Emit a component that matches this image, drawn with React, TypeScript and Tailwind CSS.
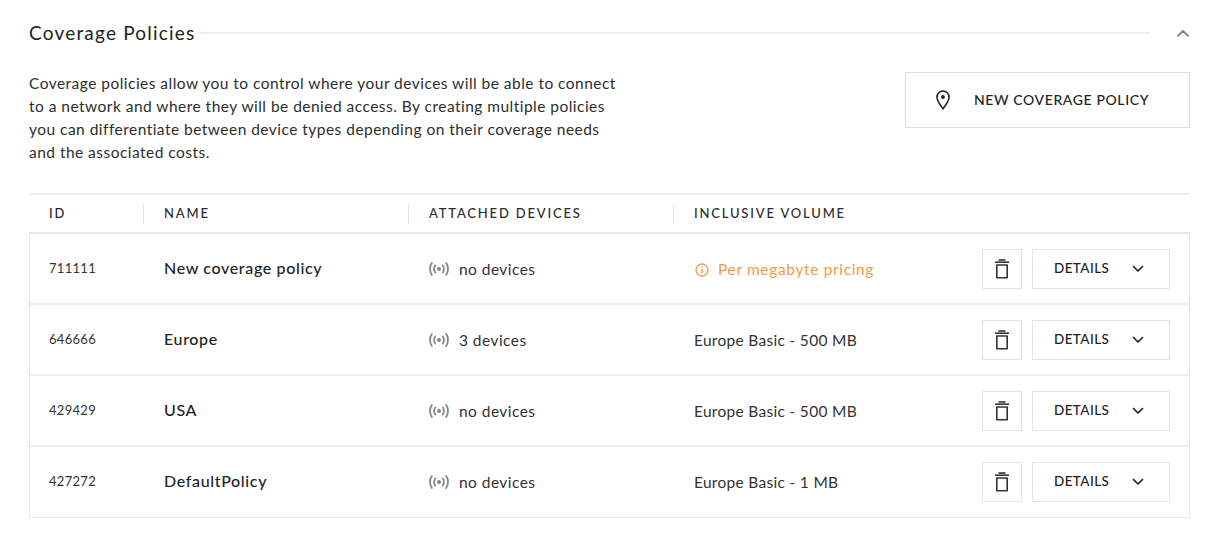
const policies = [
  { id: "711111", name: "New coverage policy", devices: "no devices", volume: "" },
  { id: "646666", name: "Europe", devices: "3 devices", volume: "Europe Basic - 500 MB" },
  { id: "429429", name: "USA", devices: "no devices", volume: "Europe Basic - 500 MB" },
  { id: "427272", name: "DefaultPolicy", devices: "no devices", volume: "Europe Basic - 1 MB" },
];

function SignalIcon() {
  return (
    <svg width="20" height="14" viewBox="0 0 20 14" fill="none" stroke="#858585" strokeWidth="1.8" strokeLinecap="round">
      <path d="M2.8 1C0.4 4.4 0.4 9.6 2.8 13" />
      <path d="M6.2 3.4C5 5.4 5 8.6 6.2 10.6" />
      <circle cx="10" cy="7" r="2" fill="#858585" stroke="none" />
      <path d="M13.8 3.4C15 5.4 15 8.6 13.8 10.6" />
      <path d="M17.2 1C19.6 4.4 19.6 9.6 17.2 13" />
    </svg>
  );
}

function InfoIcon() {
  return (
    <svg width="14" height="14" viewBox="0 0 14 14" fill="none" stroke="#f59a45" strokeWidth="1.3" strokeLinecap="round">
      <circle cx="7" cy="7" r="6" />
      <path d="M7 6.4V10" />
      <circle cx="7" cy="4.2" r="0.8" fill="#f59a45" stroke="none" />
    </svg>
  );
}

function TrashIcon() {
  return (
    <svg width="16" height="20" viewBox="0 0 16 20" fill="none" stroke="#333" strokeWidth="1.6">
      <path d="M1 3.2H15" />
      <path d="M4.5 1H11.5" />
      <path d="M2.8 6H13.2V18.8H2.8Z" strokeLinejoin="round" />
    </svg>
  );
}

function PinIcon() {
  return (
    <svg width="14" height="20" viewBox="0 0 14 20" fill="none" stroke="#222" strokeWidth="1.6" strokeLinejoin="round">
      <path d="M7 18.8C4.6 15.2 1 11.4 1 7.2C1 3.7 3.7 1 7 1C10.3 1 13 3.7 13 7.2C13 11.4 9.4 15.2 7 18.8Z" />
      <circle cx="7" cy="7" r="1.9" fill="#222" stroke="none" />
    </svg>
  );
}

function Chevron({ up, color }: { up?: boolean; color: string }) {
  return (
    <svg width="12" height="8" viewBox="0 0 12 8" fill="none" stroke={color} strokeWidth="1.7" strokeLinecap="round" strokeLinejoin="round">
      <path d={up ? "M1 6.8L6 1.8L11 6.8" : "M1.5 1.5L6 6L10.5 1.5"} />
    </svg>
  );
}

function HeaderCell({ label, width, divider }: { label: string; width: string; divider?: boolean }) {
  return (
    <div className={`flex h-[20px] items-center ${width} ${divider ? "border-r border-[#e4e4e4]" : ""}`}>
      <span className="text-[13px] font-medium tracking-[1.82px] text-[#2b2b2b]">{label}</span>
    </div>
  );
}

export default function App() {
  return (
    <div className="min-h-[550px] bg-white pl-[29px] pr-[27px] pt-[20px] font-['Lato',sans-serif] text-[#2b2b2b]">
      <div className="flex h-[26px] items-center">
        <h2 className="text-[19px] font-normal tracking-[1.2px] text-[#222]">Coverage Policies</h2>
        <div className="ml-[5px] h-[2px] flex-1 bg-[#eeeeee]" />
        <div className="flex w-[40px] justify-end pr-[1px]">
          <Chevron up color="#7d7d7d" />
        </div>
      </div>

      <div className="mt-[26px] flex items-start justify-between">
        <p className="w-[600px] whitespace-nowrap text-[15.5px] leading-[23px] tracking-[0.47px] text-[#2e2e2e]">
          Coverage policies allow you to control where your devices will be able to connect
          <br />
          to a network and where they will be denied access. By creating multiple policies
          <br />
          you can differentiate between device types depending on their coverage needs
          <br />
          and the associated costs.
        </p>
        <button className="flex h-[56px] w-[285px] items-center border border-[#dedede] pl-[30px]">
          <PinIcon />
          <span className="ml-[24px] pb-[1px] text-[14px] font-medium tracking-[0.62px] text-[#222]">NEW COVERAGE POLICY</span>
        </button>
      </div>

      <div className="mt-[29px] border-t-2 border-[#eeeeee]">
        <div className="flex h-[37px] items-center pl-[20px]">
          <HeaderCell label="ID" width="w-[95px]" divider />
          <div className="w-[20px]" />
          <HeaderCell label="NAME" width="w-[245px]" divider />
          <div className="w-[20px]" />
          <HeaderCell label="ATTACHED DEVICES" width="w-[245px]" divider />
          <div className="w-[20px]" />
          <HeaderCell label="INCLUSIVE VOLUME" width="w-[200px]" />
        </div>

        <div className="border border-t-2 border-[#e8e8e8]">
          {policies.map((p, i) => (
            <div
              key={p.id}
              className={`flex items-center pl-[19px] pr-[19px] ${i < policies.length - 1 ? "h-[71px] border-b-2 border-[#eeeeee]" : "h-[70px] pb-[1px]"}`}
            >
              <div className="w-[115px] pt-[1px] text-[13px] tracking-[0.3px] text-[#333]">{p.id}</div>
              <div className="w-[265px] pb-[1px] text-[16px] font-medium tracking-[0.65px] text-[#222]">{p.name}</div>
              <div className="flex w-[265px] items-center text-[15.5px] tracking-[0.45px] text-[#333]">
                <SignalIcon />
                <span className="ml-[10px] pt-[2px]">{p.devices}</span>
              </div>
              <div className="flex flex-1 items-center pt-[2px] text-[15.5px] tracking-[0.3px] text-[#333]">
                {p.volume ? (
                  p.volume
                ) : (
                  <span className="flex items-center pl-[1px] tracking-[0.65px] text-[#f59a45]">
                    <InfoIcon />
                    <span className="ml-[9px]">Per megabyte pricing</span>
                  </span>
                )}
              </div>
              <button className="flex h-[40px] w-[40px] items-center justify-center border border-[#e4e4e4]">
                <TrashIcon />
              </button>
              <button className="ml-[10px] flex h-[40px] w-[138px] items-center border border-[#e4e4e4] pl-[21px]">
                <span className="text-[13.5px] font-medium tracking-[0.4px] text-[#222]">DETAILS</span>
                <span className="ml-[23px] flex">
                  <Chevron color="#222" />
                </span>
              </button>
            </div>
          ))}
        </div>
      </div>
    </div>
  );
}
